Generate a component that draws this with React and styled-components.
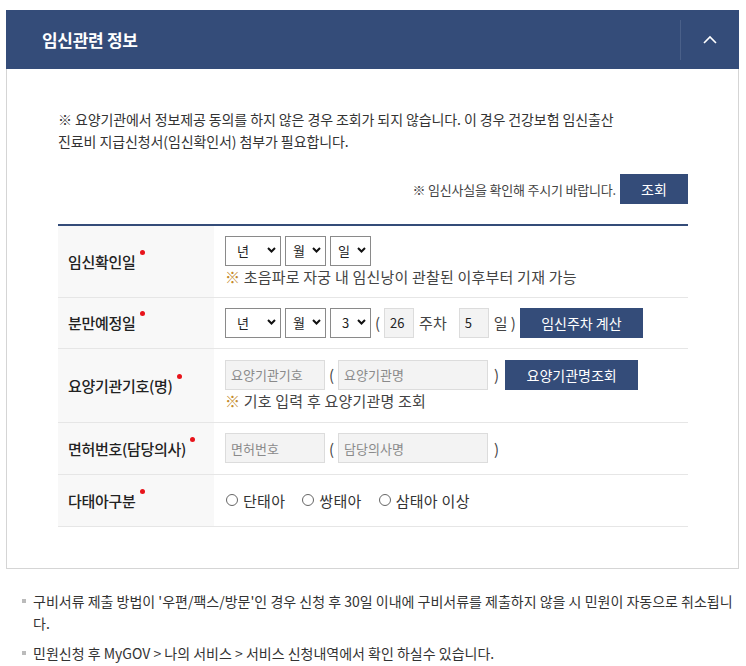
import React from "react"
import styled, { createGlobalStyle } from "styled-components"

const Global = createGlobalStyle`
  html, body {
    margin: 0;
    padding: 0;
    background: #fff;
  }
  body {
    font-family: "Noto Sans CJK KR", "Noto Sans", sans-serif;
    color: #333;
  }
`

const Page = styled.div`
  padding: 10px 7px 0 6px;
`

const Panel = styled.section`
  border: 1px solid #d5d5d5;
  border-top: none;
`

const PanelHead = styled.div`
  height: 59px;
  background: #344c79;
  display: flex;
  align-items: center;
  margin: 0 -1px;
  h2 {
    flex: 1;
    margin: 0;
    padding-left: 36px;
    font-size: 17px;
    font-weight: 700;
    letter-spacing: -0.3px;
    color: #fff;
  }
`

const ToggleButton = styled.button`
  width: 59px;
  height: 40px;
  border: none;
  border-left: 1px solid #4a6089;
  background: transparent;
  display: flex;
  align-items: center;
  justify-content: center;
  cursor: pointer;
`

const PanelBody = styled.div`
  padding: 39px 50px 41px 51px;
`

const Notice = styled.p`
  margin: 0;
  font-size: 14px;
  line-height: 22px;
  color: #333;
  letter-spacing: -0.1px;
`

const CheckLine = styled.div`
  display: flex;
  justify-content: flex-end;
  align-items: center;
  gap: 4px;
  margin-top: 22px;
  font-size: 13px;
  color: #444;
  letter-spacing: -0.2px;
`

const Button = styled.button`
  height: 30px;
  width: ${p => p.$w || 68}px;
  border: none;
  background: #344c79;
  color: #fff;
  font-family: inherit;
  font-size: 14px;
  padding: 0;
  cursor: pointer;
`

const Table = styled.table`
  width: 100%;
  margin-top: 20px;
  border-collapse: collapse;
  border-top: 2px solid #344c79;
  tr {
    border-bottom: 1px solid #e6e6e6;
  }
`

const Label = styled.th`
  width: 156px;
  height: ${p => p.$h}px;
  box-sizing: border-box;
  background: #f8f8f8;
  text-align: left;
  padding: 0 0 0 10px;
  font-size: 15px;
  font-weight: 500;
  color: #222;
  letter-spacing: -0.3px;
  span {
    position: relative;
  }
  span::after {
    content: "";
    position: absolute;
    right: -9px;
    top: -1px;
    width: 5px;
    height: 5px;
    border-radius: 50%;
    background: #e8141b;
  }
`

const Cell = styled.td`
  padding: 8px 11px;
  font-size: 15px;
  color: #333;
`

const Line = styled.div`
  display: flex;
  align-items: center;
  gap: 4px;
`

const SelectWrap = styled.div`
  position: relative;
  width: ${p => p.$w}px;
  height: 30px;
  svg {
    position: absolute;
    right: 5px;
    top: 11px;
    pointer-events: none;
  }
`

const Select = styled.select`
  appearance: none;
  width: 100%;
  height: 100%;
  box-sizing: border-box;
  border: 1px solid #8a8a8a;
  background: #fff;
  padding: 0 0 0 ${p => p.$pl || 11}px;
  font-family: inherit;
  font-size: 13px;
  color: #222;
`

const Input = styled.input`
  width: ${p => p.$w}px;
  height: 30px;
  box-sizing: border-box;
  border: 1px solid #dcdcdc;
  background: #f3f3f3;
  padding: 0 5px;
  font-family: inherit;
  font-size: 13px;
  color: #222;
  &::placeholder {
    color: #8a8a8a;
  }
`

const Text = styled.span`
  font-size: 15px;
  color: #444;
  margin: 0 ${p => p.$mr || 0}px 0 ${p => p.$ml || 0}px;
`

const Hint = styled.div`
  margin-top: 1px;
  font-size: 15px;
  line-height: 20px;
  color: #444;
  letter-spacing: 0.2px;
  b {
    font-weight: 400;
    color: #c48a2c;
  }
`

const Radios = styled.div`
  display: flex;
  gap: 16px;
  font-size: 15px;
  color: #333;
  letter-spacing: 0.3px;
  label {
    display: flex;
    align-items: center;
    gap: 5px;
  }
  input {
    appearance: none;
    margin: 0 0 0 1px;
    width: 12px;
    height: 12px;
    border: 1px solid #666;
    border-radius: 50%;
    background: #fff;
  }
`

const Guide = styled.ul`
  list-style: none;
  margin: 21px 0 0;
  padding: 0 0 0 16px;
  li {
    position: relative;
    padding-left: 11px;
    font-size: 14px;
    line-height: 22px;
    color: #333;
    letter-spacing: 0;
    margin-bottom: 8px;
  }
  li::before {
    content: "";
    position: absolute;
    left: 0;
    top: 9px;
    width: 4px;
    height: 4px;
    background: #bbb;
  }
`

const Chevron = () => (
  <svg width="9" height="6" viewBox="0 0 9 6">
    <path d="M1 1 L4.5 4.5 L8 1" fill="none" stroke="#111" strokeWidth="2" />
  </svg>
)

const Dropdown = ({ w, value, pl }) => (
  <SelectWrap $w={w}>
    <Select $pl={pl} defaultValue={value}>
      <option>{value}</option>
    </Select>
    <Chevron />
  </SelectWrap>
)

export default function App() {
  return (
    <Page>
      <Global />
      <Panel>
        <PanelHead>
          <h2>임신관련 정보</h2>
          <ToggleButton aria-label="접기">
            <svg width="14" height="9" viewBox="0 0 14 9">
              <path d="M1 8 L7 2 L13 8" fill="none" stroke="#fff" strokeWidth="1.6" />
            </svg>
          </ToggleButton>
        </PanelHead>
        <PanelBody>
          <Notice>
            ※ 요양기관에서 정보제공 동의를 하지 않은 경우 조회가 되지 않습니다. 이 경우 건강보험 임신출산
            <br />
            진료비 지급신청서(임신확인서) 첨부가 필요합니다.
          </Notice>
          <CheckLine>
            ※ 임신사실을 확인해 주시기 바랍니다.
            <Button>조회</Button>
          </CheckLine>
          <Table>
            <tbody>
              <tr>
                <Label $h={72}><span>임신확인일</span></Label>
                <Cell>
                  <Line>
                    <Dropdown w={56} value="년" />
                    <Dropdown w={41} value="월" pl={7} />
                    <Dropdown w={41} value="일" pl={7} />
                  </Line>
                  <Hint><b>※</b> 초음파로 자궁 내 임신낭이 관찰된 이후부터 기재 가능</Hint>
                </Cell>
              </tr>
              <tr>
                <Label $h={51}><span>분만예정일</span></Label>
                <Cell>
                  <Line>
                    <Dropdown w={56} value="년" />
                    <Dropdown w={41} value="월" pl={7} />
                    <Dropdown w={41} value="3" pl={11} />
                    <Text>(</Text>
                    <Input $w={30} defaultValue="26" />
                    <Text $ml={1} $mr={8}>주차</Text>
                    <Input $w={30} defaultValue="5" />
                    <Text $ml={1}>일 )</Text>
                    <Button $w={123}>임신주차 계산</Button>
                  </Line>
                </Cell>
              </tr>
              <tr>
                <Label $h={74}><span>요양기관기호(명)</span></Label>
                <Cell>
                  <Line>
                    <Input $w={100} placeholder="요양기관기호" />
                    <Text>(</Text>
                    <Input $w={150} placeholder="요양기관명" />
                    <Text $ml={2} $mr={2}>)</Text>
                    <Button $w={133}>요양기관명조회</Button>
                  </Line>
                  <Hint><b>※</b> 기호 입력 후 요양기관명 조회</Hint>
                </Cell>
              </tr>
              <tr>
                <Label $h={52}><span>면허번호(담당의사)</span></Label>
                <Cell>
                  <Line>
                    <Input $w={100} placeholder="면허번호" />
                    <Text>(</Text>
                    <Input $w={150} placeholder="담당의사명" />
                    <Text $ml={2}>)</Text>
                  </Line>
                </Cell>
              </tr>
              <tr>
                <Label $h={52}><span>다태아구분</span></Label>
                <Cell>
                  <Radios>
                    <label><input type="radio" name="multi" />단태아</label>
                    <label><input type="radio" name="multi" />쌍태아</label>
                    <label><input type="radio" name="multi" />삼태아 이상</label>
                  </Radios>
                </Cell>
              </tr>
            </tbody>
          </Table>
        </PanelBody>
      </Panel>
      <Guide>
        <li>구비서류 제출 방법이 '우편/팩스/방문'인 경우 신청 후 30일 이내에 구비서류를 제출하지 않을 시 민원이 자동으로 취소됩니다.</li>
        <li>민원신청 후 MyGOV &gt; 나의 서비스 &gt; 서비스 신청내역에서 확인 하실수 있습니다.</li>
      </Guide>
    </Page>
  )
}
